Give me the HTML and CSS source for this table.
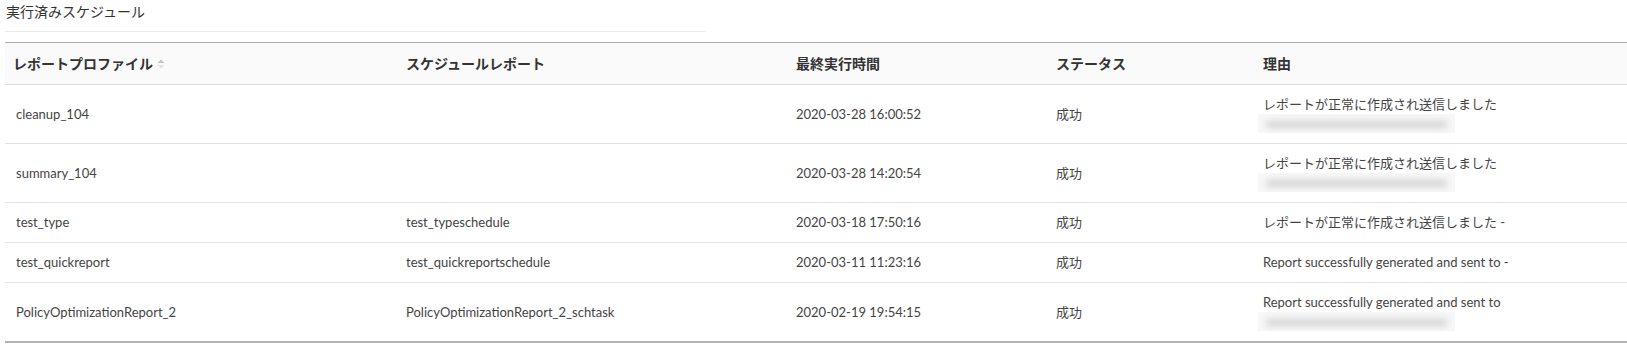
FILE: index.html
```html
<!DOCTYPE html>
<html lang="ja">
<head>
<meta charset="utf-8">
<title>実行済みスケジュール</title>
<link rel="stylesheet" href="styles.css">
</head>
<body>
<div class="page">
  <div class="title">実行済みスケジュール</div>
  <table class="grid">
    <colgroup>
      <col class="c1"><col class="c2"><col class="c3"><col class="c4"><col class="c5">
    </colgroup>
    <thead>
      <tr>
        <th class="first"><span class="sortable">レポートプロファイル<svg class="sort" width="8" height="10" viewBox="0 0 8 10"><path d="M4 0.5 L7.5 4 L0.5 4 Z" fill="#c4c4c4"/><path d="M4 9.5 L7.5 6 L0.5 6 Z" fill="#e2e2e2"/></svg></span></th>
        <th>スケジュールレポート</th>
        <th>最終実行時間</th>
        <th>ステータス</th>
        <th>理由</th>
      </tr>
    </thead>
    <tbody>
      <tr>
        <td>cleanup_104</td>
        <td></td>
        <td>2020-03-28 16:00:52</td>
        <td>成功</td>
        <td>レポートが正常に作成され送信しました<span class="redact"><span class="band"></span></span></td>
      </tr>
      <tr>
        <td>summary_104</td>
        <td></td>
        <td>2020-03-28 14:20:54</td>
        <td>成功</td>
        <td>レポートが正常に作成され送信しました<span class="redact"><span class="band"></span></span></td>
      </tr>
      <tr>
        <td>test_type</td>
        <td>test_typeschedule</td>
        <td>2020-03-18 17:50:16</td>
        <td>成功</td>
        <td>レポートが正常に作成され送信しました -</td>
      </tr>
      <tr>
        <td>test_quickreport</td>
        <td>test_quickreportschedule</td>
        <td>2020-03-11 11:23:16</td>
        <td>成功</td>
        <td>Report successfully generated and sent to -</td>
      </tr>
      <tr>
        <td>PolicyOptimizationReport_2</td>
        <td>PolicyOptimizationReport_2_schtask</td>
        <td>2020-02-19 19:54:15</td>
        <td>成功</td>
        <td>Report successfully generated and sent to<span class="redact"><span class="band"></span></span></td>
      </tr>
    </tbody>
  </table>
</div>
</body>
</html>
```
FILE: styles.css
```css
html, body {
  margin: 0;
  padding: 0;
  background: #ffffff;
}
body {
  font-family: "Lato", "Noto Sans CJK JP", sans-serif;
  color: #444;
}
.page {
  padding-left: 5px;
}
.title {
  width: 701px;
  padding: 2px 0 9px 1px;
  line-height: 20px;
  font-size: 14px;
  color: #333;
  border-bottom: 1px solid #e9e9e9;
  box-sizing: border-box;
  height: 32px;
}
.grid {
  margin-top: 10px;
  width: 1622px;
  border-collapse: collapse;
  table-layout: fixed;
  border-top: 1px solid #ababab;
  border-bottom: 2px solid #b3b3b3;
}
.c1 { width: 390px; }
.c2 { width: 390px; }
.c3 { width: 260px; }
.c4 { width: 207px; }
.c5 { width: 375px; }
.grid th {
  background: #fafafa;
  text-align: left;
  font-weight: bold;
  font-size: 14px;
  line-height: 19px;
  color: #333;
  padding: 11px 11px;
  border-bottom: 1px solid #dedede;
  vertical-align: middle;
}
.grid th.first {
  padding-left: 8px;
}
.sortable {
  display: inline-flex;
  align-items: center;
  gap: 4px;
}
.sort {
  display: block;
}
.grid td {
  font-size: 13px;
  line-height: 19px;
  padding: 10px 11px;
  border-bottom: 1px solid #e1e1e1;
  vertical-align: middle;
  color: #444;
}
.grid tbody tr:last-child td {
  border-bottom: none;
}
.redact {
  display: block;
  width: 197px;
  height: 19px;
  margin-left: -5px;
  background: #f7f7f7;
  position: relative;
  overflow: hidden;
}
.band {
  position: absolute;
  left: 8px;
  right: 8px;
  top: 7px;
  height: 7px;
  background: #d4d4d4;
  filter: blur(3px);
  border-radius: 4px;
}
```
